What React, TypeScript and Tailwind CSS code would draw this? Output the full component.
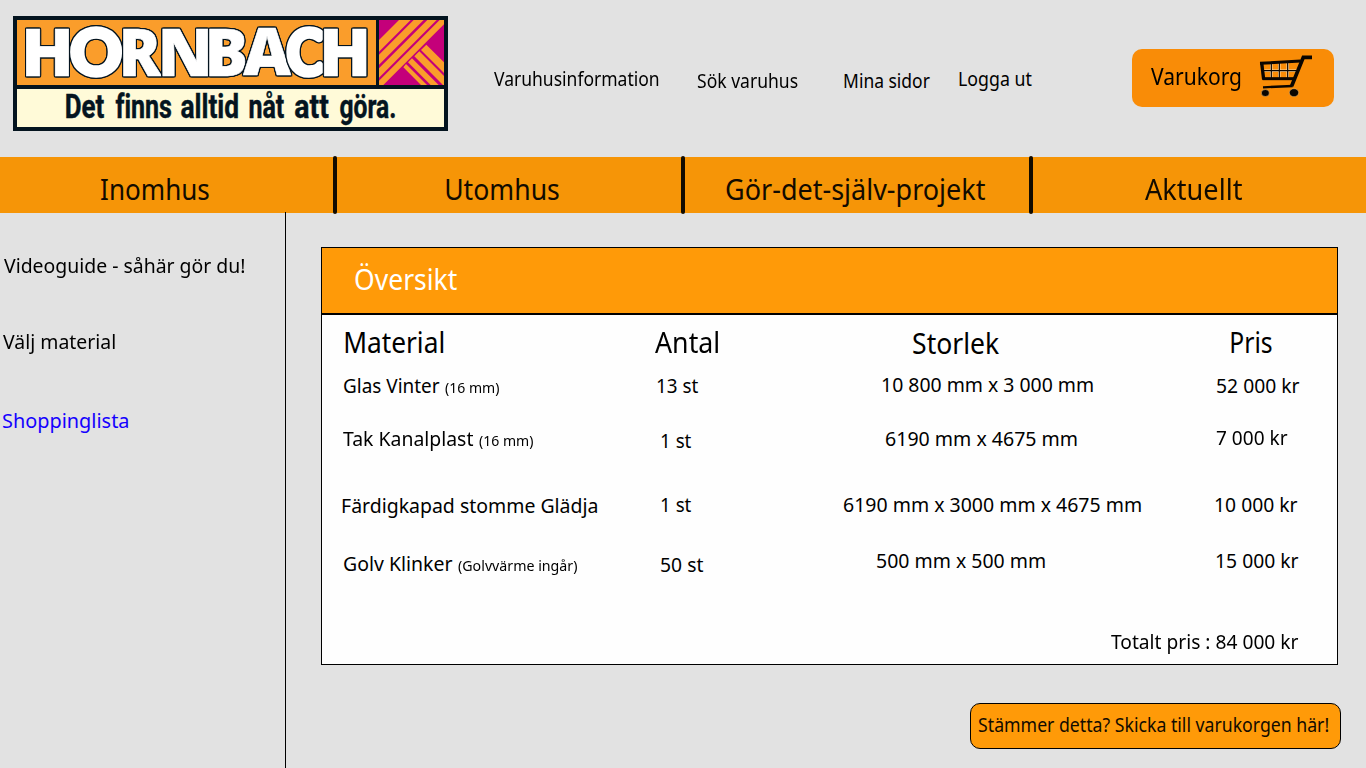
import { useLayoutEffect, useRef, useState } from "react";

const FONT = '"Noto Sans", sans-serif';

type Ink = { left: number; width: number; ascent: number; descent: number };

function inkOf(text: string, font: string): Ink {
  const ctx = document.createElement("canvas").getContext("2d")!;
  ctx.font = font;
  const m = ctx.measureText(text);
  return {
    left: m.actualBoundingBoxLeft,
    width: m.actualBoundingBoxLeft + m.actualBoundingBoxRight,
    ascent: m.actualBoundingBoxAscent,
    descent: m.actualBoundingBoxDescent,
  };
}

/** One line of text whose ink fills the width of its box exactly. */
function Fit({ children, className = "" }: { children: string; className?: string }) {
  const box = useRef<HTMLSpanElement>(null);
  const [transform, setTransform] = useState("none");
  useLayoutEffect(() => {
    const el = box.current!;
    const size = getComputedStyle(el).fontSize;
    const ink = inkOf(children, `${size} ${FONT}`);
    const s = el.clientWidth / ink.width;
    setTransform(`scaleX(${s}) translateX(${ink.left}px)`);
  }, [children]);
  return (
    <span ref={box} className={`block shrink-0 whitespace-nowrap ${className}`}>
      <span className="inline-block origin-left" style={{ transform }}>
        {children}
      </span>
    </span>
  );
}

/** Logo lettering: text stretched between x1 and x2, from cap line to baseline. */
function Mark({
  text, x1, x2, top, base, family, weight, grow = 0, flat,
}: {
  text: string; x1: number; x2: number; top: number; base: number;
  family: string; weight: number; grow?: number; flat?: string;
}) {
  const ink = inkOf(text, `${weight} 100px ${family}`);
  const ref = inkOf(flat ?? text, `${weight} 100px ${family}`);
  const sx = (x2 - x1 - grow) / ink.width;
  const descent = flat ? 0 : ref.descent;
  const sy = (base - top - grow) / (ref.ascent + descent);
  const tx = x1 + grow / 2 + ink.left * sx;
  const ty = base - grow / 2 - descent * sy;
  return (
    <text
      transform={`translate(${tx} ${ty}) scale(${sx} ${sy})`}
      fontSize="100"
      fontFamily={family}
      fontWeight={weight}
      strokeWidth={grow / ((sx + sy) / 2)}
    >
      {text}
    </text>
  );
}

type Letter = { c: string; x1: number; x2: number; round?: boolean };

const BRAND: Letter[] = [
  { c: "H", x1: 25.5, x2: 69 },
  { c: "O", x1: 69.8, x2: 122.2, round: true },
  { c: "R", x1: 122.8, x2: 162 },
  { c: "N", x1: 162, x2: 208.2 },
  { c: "B", x1: 209, x2: 245.5 },
  { c: "A", x1: 243, x2: 291.5 },
  { c: "C", x1: 286, x2: 327, round: true },
  { c: "H", x1: 323.6, x2: 366.5 },
];

const SLOGAN: [string, number, number][] = [
  ["Det", 66, 104],
  ["finns", 115.5, 171],
  ["alltid", 181, 238],
  ["nåt", 249.5, 284],
  ["att", 295, 328.5],
  ["göra.", 340, 395],
];

function Logo() {
  return (
    <svg className="mt-4 ml-[13px] h-[115px] w-[435px] shrink-0 overflow-visible" viewBox="13 16 435 115">
      <rect x="13" y="16" width="435" height="115" fill="#04141f" />
      <rect x="17" y="20" width="359" height="65" fill="#fa9d2b" />
      <rect x="17" y="89" width="427" height="38" fill="#fffad8" />
      <g fill="#fff" stroke="#fff" strokeLinejoin="miter">
        {BRAND.map(({ c, x1, x2, round }, i) => (
          <g key={i} className="[filter:drop-shadow(1px_0_0_#04141f)_drop-shadow(-1px_0_0_#04141f)_drop-shadow(0_1px_0_#04141f)_drop-shadow(0_-1px_0_#04141f)]">
            <Mark
              text={c}
              x1={x1}
              x2={x2}
              top={round ? 26.8 : 28.8}
              base={round ? 78.2 : 76.2}
              family={round ? "Lato" : "Open Sans"}
              weight={round ? 900 : 800}
              grow={round ? 4.5 : 0.6}
            />
          </g>
        ))}
      </g>
      <g fill="#04141f" stroke="#04141f" className="[font-variant-ligatures:none]">
        {SLOGAN.map(([w, x1, x2]) => (
          <Mark key={w} text={w} x1={x1} x2={x2} top={94} base={118.5} family="Roboto" weight={700} grow={0.4} flat="D" />
        ))}
      </g>
      <svg x="379" y="20" width="65" height="65" viewBox="15 18 195 195">
        <rect x="15" y="18" width="195" height="195" fill="#c4007a" />
        <g fill="#fa9d2b">
          <path d="M93 0L0 93V128L128 0zM137 0L0 137V167L167 0zM178 0L-20 198V226L206 0zM235 -20L-20 235V261L241 0z" />
          <path d="M157 92L141 108L260 227V194zM136 112L121 127L230 236L250 226zM114 133L102 145L190 233L214 233zM96 150L88 160L160 232L190 244z" />
        </g>
      </svg>
    </svg>
  );
}

function Cart() {
  return (
    <svg className="mt-[-1px] ml-[18px] h-14 w-[54px]" viewBox="27 0 162 168" fill="none" stroke="#0a0500">
      <g stroke="#f9dcae" strokeWidth="7">
        <path d="M38 68H142M64 48V90M88 46V90M113 44V90" />
      </g>
      <path d="M36 68H144M64 45V92M88 44V92M113 42V92" strokeWidth="3.5" />
      <path d="M30 46L152 39" strokeWidth="9" />
      <path d="M35 44L41 95" strokeWidth="10" />
      <path d="M38 92H132" strokeWidth="9" />
      <path d="M186 28H160L125 114" strokeWidth="11" />
      <path d="M39 118L128 114" strokeWidth="7" />
      <ellipse cx="46" cy="135" rx="12" ry="10.5" fill="#0a0500" stroke="#f7c27a" strokeWidth="1.5" />
      <ellipse cx="132" cy="134" rx="14" ry="12" fill="#0a0500" stroke="#f7c27a" strokeWidth="1.5" />
    </svg>
  );
}

const Divider = () => <span className="-my-px w-1 shrink-0 rounded-full bg-[#120b00]" />;

export default function App() {
  return (
    <div className="flex h-[768px] w-[1366px] flex-col overflow-hidden bg-[#e2e2e2] font-['Noto_Sans',sans-serif] text-black">
      <header className="flex h-[157px] shrink-0 items-start">
        <Logo />
        <nav className="flex items-start text-[19px] leading-[30px]">
          <Fit className="mt-[64px] ml-[46px] w-[165px]">Varuhusinformation</Fit>
          <Fit className="mt-[66px] ml-[38px] w-[101px]">Sök varuhus</Fit>
          <Fit className="mt-[66px] ml-[46px] w-[86px]">Mina sidor</Fit>
          <Fit className="mt-[64px] ml-[29px] w-[73px]">Logga ut</Fit>
        </nav>
        <button className="mt-[49px] ml-[100px] flex h-[58px] w-[202px] items-start rounded-[10px] bg-[#f98c07]">
          <Fit className="mt-3 ml-[19px] w-[90px] text-[23px] leading-[30px]">Varukorg</Fit>
          <Cart />
        </button>
      </header>

      <nav className="flex h-14 shrink-0 bg-[#f69507] text-[29px] leading-10 text-[#120b00]">
        <div className="w-[333px] pt-3 pl-[101px]"><Fit className="w-[108px]">Inomhus</Fit></div>
        <Divider />
        <div className="w-[344px] pt-3 pl-[109px]"><Fit className="w-[113px]">Utomhus</Fit></div>
        <Divider />
        <div className="w-[344px] pt-3 pl-[41px]"><Fit className="w-[259px]">Gör-det-själv-projekt</Fit></div>
        <Divider />
        <div className="pt-3 pl-[112px]"><Fit className="w-[97px]">Aktuellt</Fit></div>
      </nav>

      <div className="flex flex-1">
        <aside className="-mt-px w-[286px] shrink-0 border-r border-black pt-[38px] text-[20.5px] leading-[30px]">
          <Fit className="ml-1 w-[241px]">Videoguide - såhär gör du!</Fit>
          <Fit className="mt-[46px] ml-[3px] w-[112px]">Välj material</Fit>
          <Fit className="mt-[49px] ml-[3px] w-[125px] text-[#1400ff]">Shoppinglista</Fit>
        </aside>

        <main className="flex w-[1080px] flex-col pt-[34px] pl-[35px]">
          <section className="h-[418px] w-[1017px] border border-black bg-[#fefefe] text-[20.5px] leading-[30px]">
            <h1 className="h-[67px] border-b-2 border-black bg-[#ff9a08] pt-[11px] pl-[33px] text-[28.5px] leading-10 text-white">
              <Fit className="w-[102px]">Översikt</Fit>
            </h1>
            <div className="flex h-[55px] items-start pt-[7px] pl-[23px] text-[28.5px] leading-10">
              <Fit className="w-[98px]">Material</Fit>
              <Fit className="ml-[212px] w-[63px]">Antal</Fit>
              <Fit className="mt-px ml-[195px] w-[86px]">Storlek</Fit>
              <Fit className="ml-[232px] w-[41px]">Pris</Fit>
            </div>
            <div className="flex h-[53px] items-start pl-[22px]">
              <Fit className="w-[96px]">Glas Vinter</Fit>
              <Fit className="mt-[2px] ml-[5px] w-[54px] text-[15px]">(16 mm)</Fit>
              <Fit className="ml-[158px] w-[41px]">13 st</Fit>
              <Fit className="-mt-px ml-[184px] w-[211px]">10 800 mm x 3 000 mm</Fit>
              <Fit className="ml-[124px] w-[83px]">52 000 kr</Fit>
            </div>
            <div className="flex h-[67px] items-start pl-[21px]">
              <Fit className="w-[130px]">Tak Kanalplast</Fit>
              <Fit className="mt-[2px] ml-[6px] w-[54px] text-[15px]">(16 mm)</Fit>
              <Fit className="mt-[2px] ml-[128px] w-[30px]">1 st</Fit>
              <Fit className="ml-[195px] w-[191px]">6190 mm x 4675 mm</Fit>
              <Fit className="-mt-px ml-[139px] w-[72px]">7 000 kr</Fit>
            </div>
            <div className="flex h-[58px] items-start pl-[20px]">
              <Fit className="w-[255px]">Färdigkapad stomme Glädja</Fit>
              <Fit className="-mt-px ml-[64px] w-[30px]">1 st</Fit>
              <Fit className="-mt-px ml-[153px] w-[297px]">6190 mm x 3000 mm x 4675 mm</Fit>
              <Fit className="-mt-px ml-[74px] w-[83px]">10 000 kr</Fit>
            </div>
            <div className="flex h-[78px] items-start pl-[22px]">
              <Fit className="w-[109px]">Golv Klinker</Fit>
              <Fit className="mt-[2px] ml-[5px] w-[119px] text-[15px]">(Golvvärme ingår)</Fit>
              <Fit className="mt-px ml-[84px] w-[42px]">50 st</Fit>
              <Fit className="-mt-[3px] ml-[174px] w-[168px]">500 mm x 500 mm</Fit>
              <Fit className="-mt-[3px] ml-[171px] w-[83px]">15 000 kr</Fit>
            </div>
            <div className="flex pl-[789px]">
              <Fit className="w-[188px]">Totalt pris : 84 000 kr</Fit>
            </div>
          </section>
          <button className="mt-[38px] ml-[649px] flex h-[46px] w-[371px] shrink-0 items-start rounded-[10px] border border-black bg-[#ff9a08] text-[19.5px] leading-[30px] text-[#120b00]">
            <Fit className="mt-[6px] ml-[8px] w-[349px]">Stämmer detta? Skicka till varukorgen här!</Fit>
          </button>
        </main>
      </div>
    </div>
  );
}
